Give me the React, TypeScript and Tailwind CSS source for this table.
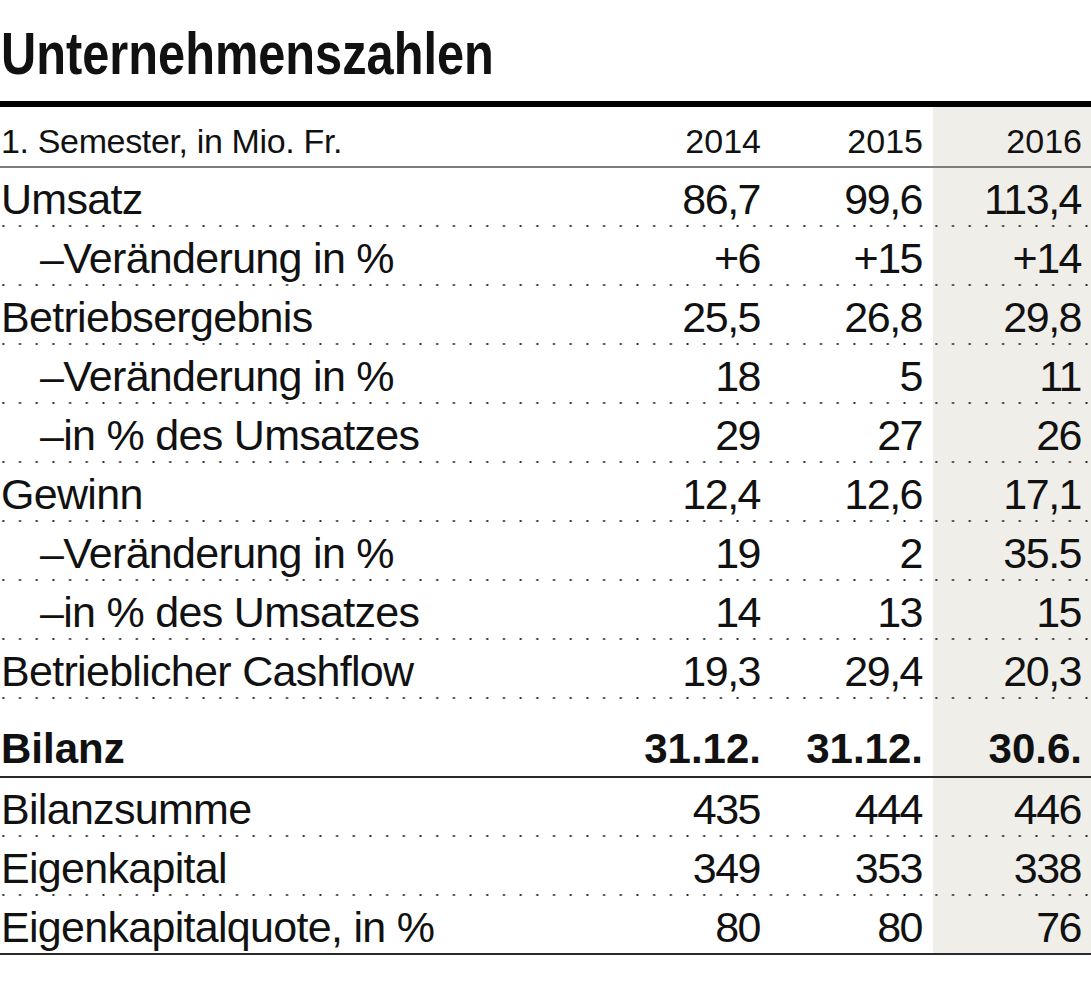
import React from 'react';

type Row = {
  label: string;
  values: [string, string, string];
  indent?: boolean;
};

const results: Row[] = [
  { label: 'Umsatz', values: ['86,7', '99,6', '113,4'] },
  { label: '–Veränderung in %', values: ['+6', '+15', '+14'], indent: true },
  { label: 'Betriebsergebnis', values: ['25,5', '26,8', '29,8'] },
  { label: '–Veränderung in %', values: ['18', '5', '11'], indent: true },
  { label: '–in % des Umsatzes', values: ['29', '27', '26'], indent: true },
  { label: 'Gewinn', values: ['12,4', '12,6', '17,1'] },
  { label: '–Veränderung in %', values: ['19', '2', '35.5'], indent: true },
  { label: '–in % des Umsatzes', values: ['14', '13', '15'], indent: true },
  { label: 'Betrieblicher Cashflow', values: ['19,3', '29,4', '20,3'] },
];

const balance: Row[] = [
  { label: 'Bilanzsumme', values: ['435', '444', '446'] },
  { label: 'Eigenkapital', values: ['349', '353', '338'] },
  { label: 'Eigenkapitalquote, in %', values: ['80', '80', '76'] },
];

const dots =
  'bg-[radial-gradient(circle,#2a2a2a_0.9px,transparent_1.3px)] bg-[length:16.7px_2px] bg-[position:-5px_0] bg-repeat-x';

function DottedRule() {
  return (
    <div className="flex h-[2px]">
      <div className={`flex-1 ${dots}`} />
      <div className="w-[158px] bg-[#efeee9]">
        <div className={`h-full ${dots}`} />
      </div>
    </div>
  );
}

function SolidRule({ className }: { className: string }) {
  return <div className={`w-full ${className}`} />;
}

type CellStyle = 'header' | 'number' | 'bold';

function Cells({ values, kind, height, pad }: { values: [string, string, string]; kind: CellStyle; height: string; pad: string }) {
  // right edges of the figures land at x 761 / 923 / 1082
  const type =
    kind === 'bold' ? 'font-bold tracking-normal' : kind === 'number' ? 'tracking-[-1.5px]' : 'tracking-normal';
  const tight = kind === 'number';
  return (
    <>
      <div className={`w-[170px] ${height} ${pad} ${tight ? 'pr-[10px]' : 'pr-[9px]'} text-right ${type}`}>{values[0]}</div>
      <div className={`w-[163px] ${height} ${pad} ${tight ? 'pr-[11px]' : 'pr-[10px]'} text-right ${type}`}>{values[1]}</div>
      <div className={`w-[158px] ${height} ${pad} ${tight ? 'pr-[10px]' : 'pr-[9px]'} text-right bg-[#efeee9] ${type}`}>
        {values[2]}
      </div>
    </>
  );
}

function DataRow({ row }: { row: Row }) {
  return (
    <div className="flex text-[43px] leading-none">
      <div className={`flex-1 h-[57px] pt-[10px] whitespace-nowrap tracking-[-0.7px] ${row.indent ? 'pl-[40px]' : 'pl-[1px]'}`}>
        {row.label}
      </div>
      <Cells values={row.values} kind="number" height="h-[57px]" pad="pt-[10px]" />
    </div>
  );
}

export default function App() {
  return (
    <div className="w-[1091px] min-h-[985px] bg-white text-[#111] font-['Liberation_Sans',Arial,sans-serif]">
      {/* Title */}
      <div className="h-[101px] pt-[25px] pl-[1px]">
        <h1 className="inline-block origin-left scale-x-[0.826] whitespace-nowrap text-[59px] leading-none font-bold">
          Unternehmenszahlen
        </h1>
      </div>
      <SolidRule className="h-[6px] bg-black" />

      {/* Header */}
      <div className="flex text-[34px] leading-none">
        <div className="flex-1 h-[59px] pt-[17px] pl-[1px] whitespace-nowrap tracking-[-0.35px]">1. Semester, in Mio. Fr.</div>
        <Cells values={['2014', '2015', '2016']} kind="header" height="h-[59px]" pad="pt-[17px]" />
      </div>
      <SolidRule className="h-[2px] bg-[#7d7d7d]" />

      {results.map((row, i) => (
        <div key={i}>
          <DataRow row={row} />
          <DottedRule />
        </div>
      ))}

      {/* Bilanz */}
      <div className="flex text-[42px] leading-none">
        <div className="flex-1 h-[77px] pt-[29px] pl-[1px] font-bold">Bilanz</div>
        <Cells values={['31.12.', '31.12.', '30.6.']} kind="bold" height="h-[77px]" pad="pt-[29px]" />
      </div>
      <SolidRule className="h-[2px] bg-[#2a2a2a]" />

      {balance.map((row, i) => (
        <div key={i}>
          <DataRow row={row} />
          {i < balance.length - 1 && <DottedRule />}
        </div>
      ))}
      <SolidRule className="h-[2px] bg-[#2a2a2a]" />
    </div>
  );
}
